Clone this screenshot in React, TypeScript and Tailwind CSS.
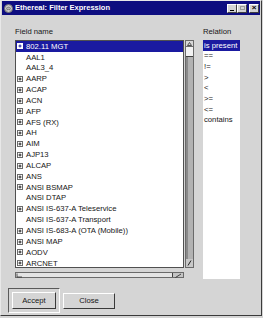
import React from 'react';

const fields: { name: string; exp: boolean }[] = [
  { name: '802.11 MGT', exp: true },
  { name: 'AAL1', exp: false },
  { name: 'AAL3_4', exp: false },
  { name: 'AARP', exp: true },
  { name: 'ACAP', exp: true },
  { name: 'ACN', exp: true },
  { name: 'AFP', exp: true },
  { name: 'AFS (RX)', exp: true },
  { name: 'AH', exp: true },
  { name: 'AIM', exp: true },
  { name: 'AJP13', exp: true },
  { name: 'ALCAP', exp: true },
  { name: 'ANS', exp: true },
  { name: 'ANSI BSMAP', exp: true },
  { name: 'ANSI DTAP', exp: false },
  { name: 'ANSI IS-637-A Teleservice', exp: true },
  { name: 'ANSI IS-637-A Transport', exp: false },
  { name: 'ANSI IS-683-A (OTA (Mobile))', exp: true },
  { name: 'ANSI MAP', exp: true },
  { name: 'AODV', exp: true },
  { name: 'ARCNET', exp: true },
];

const relations = ['is present', '==', '!=', '>', '<', '>=', '<=', 'contains'];

function Expander({ selected }: { selected: boolean }) {
  return (
    <svg width="6" height="6" viewBox="0 0 6 6" className="shrink-0">
      <rect x="0.5" y="0.5" width="5" height="5" fill={selected ? '#ffffff' : '#ffffff'} stroke={selected ? '#ffffff' : '#6a6a6a'} />
      <path d="M1.5 3H4.5M3 1.5V4.5" stroke={selected ? '#1a1aa0' : '#202020'} strokeWidth="1" />
    </svg>
  );
}

function TitleButton({ children }: { children: React.ReactNode }) {
  return (
    <div className="w-[10px] h-[9px] bg-[#d4d4d4] border-t border-l border-t-white border-l-white border-r border-b border-r-[#404040] border-b-[#404040] flex items-center justify-center">
      {children}
    </div>
  );
}

export default function App() {
  return (
    <div className="w-[263px] h-[318px] bg-[#d5d5d5] overflow-hidden" style={{ fontFamily: '"Liberation Sans", Arial, sans-serif' }}>
      <div className="w-[262px] h-[316px] border-t border-l border-t-[#e8e8e8] border-l-[#e8e8e8] border-r border-b border-r-[#3a3a3a] border-b-[#3a3a3a] flex flex-col">
        {/* Title bar */}
        <div className="mx-[1px] h-[14px] bg-[#0e0e80] flex items-center pl-[2px] pr-[1px]">
          <svg width="9" height="9" viewBox="0 0 9 9" className="shrink-0">
            <circle cx="4.5" cy="4.5" r="4" fill="#c8c8c8" stroke="#707070" />
            <path d="M2 4.5Q4.5 2 7 4.5M2.5 6Q4.5 4.5 6.5 6" stroke="#606060" fill="none" strokeWidth="0.8" />
          </svg>
          <span className="ml-[2px] text-white font-bold text-[7.5px] leading-none">Ethereal: Filter Expression</span>
          <div className="ml-auto flex items-center">
            <TitleButton>
              <div className="w-[4px] h-[1px] bg-black mt-[4px]" />
            </TitleButton>
            <TitleButton>
              <div className="w-[5px] h-[4px] border border-[#9a9a9a]" />
            </TitleButton>
            <div className="w-[2px]" />
            <TitleButton>
              <span className="text-[8px] leading-none font-bold text-black">×</span>
            </TitleButton>
          </div>
        </div>

        {/* Body */}
        <div className="pl-[14px] text-[7.7px] text-[#161616]">
          <div className="mt-[12px] h-[10px] flex items-center">
            <span className="w-[188px]">Field name</span>
            <span>Relation</span>
          </div>

          <div className="mt-[3px] flex items-start">
            <div className="flex flex-col">
              <div className="flex items-start">
                {/* Field list */}
                <div className="w-[169px] h-[228px] bg-white border border-[#505050] overflow-hidden">
                  {fields.map((f, i) => {
                    const sel = i === 0;
                    return (
                      <div
                        key={f.name}
                        className={`h-[10.85px] flex items-center pl-[1px] whitespace-nowrap ${sel ? 'bg-[#1a1aa0] text-white' : ''}`}
                      >
                        {f.exp ? <Expander selected={sel} /> : <div className="w-[6px] shrink-0" />}
                        <span className="ml-[3px]">{f.name}</span>
                      </div>
                    );
                  })}
                </div>
                {/* Vertical scrollbar */}
                <div className="ml-[1px] w-[9px] h-[228px] flex flex-col border border-[#6a6a6a] bg-[#b2b2b2]">
                  <div className="h-[6px] bg-[#d8d8d8] border-b border-[#6a6a6a] flex items-center justify-center">
                    <svg width="5" height="4" viewBox="0 0 5 4">
                      <path d="M2.5 0.5L4.5 3.5H0.5Z" fill="none" stroke="#303030" strokeWidth="0.8" />
                    </svg>
                  </div>
                  <div className="h-[10px] bg-[#f2f2f2] border-b border-[#404040]" />
                  <div className="flex-1 border-l-2 border-[#8a8a8a]" />
                  <div className="h-[8px] bg-[#c8c8c8] flex items-center justify-center">
                    <svg width="5" height="6" viewBox="0 0 5 6">
                      <path d="M1 5.5L4 0.5" stroke="#202020" strokeWidth="1" />
                    </svg>
                  </div>
                </div>
              </div>
              {/* Horizontal scrollbar */}
              <div className="mt-[4px] w-[169px] h-[6px] flex items-stretch border border-[#6a6a6a] bg-[#c4c4c4]">
                <div className="w-[157px] bg-[#e4e4e4] border-r border-[#404040] flex items-center">
                  <svg width="7" height="5" viewBox="0 0 7 5">
                    <path d="M1 0.5V4H6" fill="none" stroke="#303030" strokeWidth="0.8" />
                  </svg>
                </div>
                <div className="flex-1 flex items-center justify-end pr-[1px]">
                  <svg width="7" height="5" viewBox="0 0 7 5">
                    <path d="M0.5 4.5L6 1" stroke="#303030" strokeWidth="0.9" />
                  </svg>
                </div>
              </div>
            </div>

            {/* Relation list */}
            <div className="ml-[9px] w-[37px] h-[239px] bg-white overflow-hidden">
              {relations.map((r, i) => (
                <div
                  key={r}
                  className={`h-[10.7px] flex items-center pl-[1px] whitespace-nowrap ${i === 0 ? 'bg-[#1a1aa0] text-white' : ''}`}
                >
                  {r}
                </div>
              ))}
            </div>
          </div>

          {/* Buttons */}
          <div className="mt-[9px] -ml-[7px] flex items-center">
            <div className="w-[52px] h-[25px] border border-t-[#5a5a5a] border-l-[#5a5a5a] border-r-white border-b-white bg-[#d5d5d5] flex items-center justify-center">
              <div className="w-[44px] h-[17px] border border-t-white border-l-white border-r-[#3a3a3a] border-b-[#3a3a3a] flex items-center justify-center">
                Accept
              </div>
            </div>
            <div className="ml-[3px] w-[52px] h-[16px] border border-t-white border-l-white border-r-[#3a3a3a] border-b-[#3a3a3a] flex items-center justify-center">
              Close
            </div>
          </div>
        </div>
      </div>
    </div>
  );
}
